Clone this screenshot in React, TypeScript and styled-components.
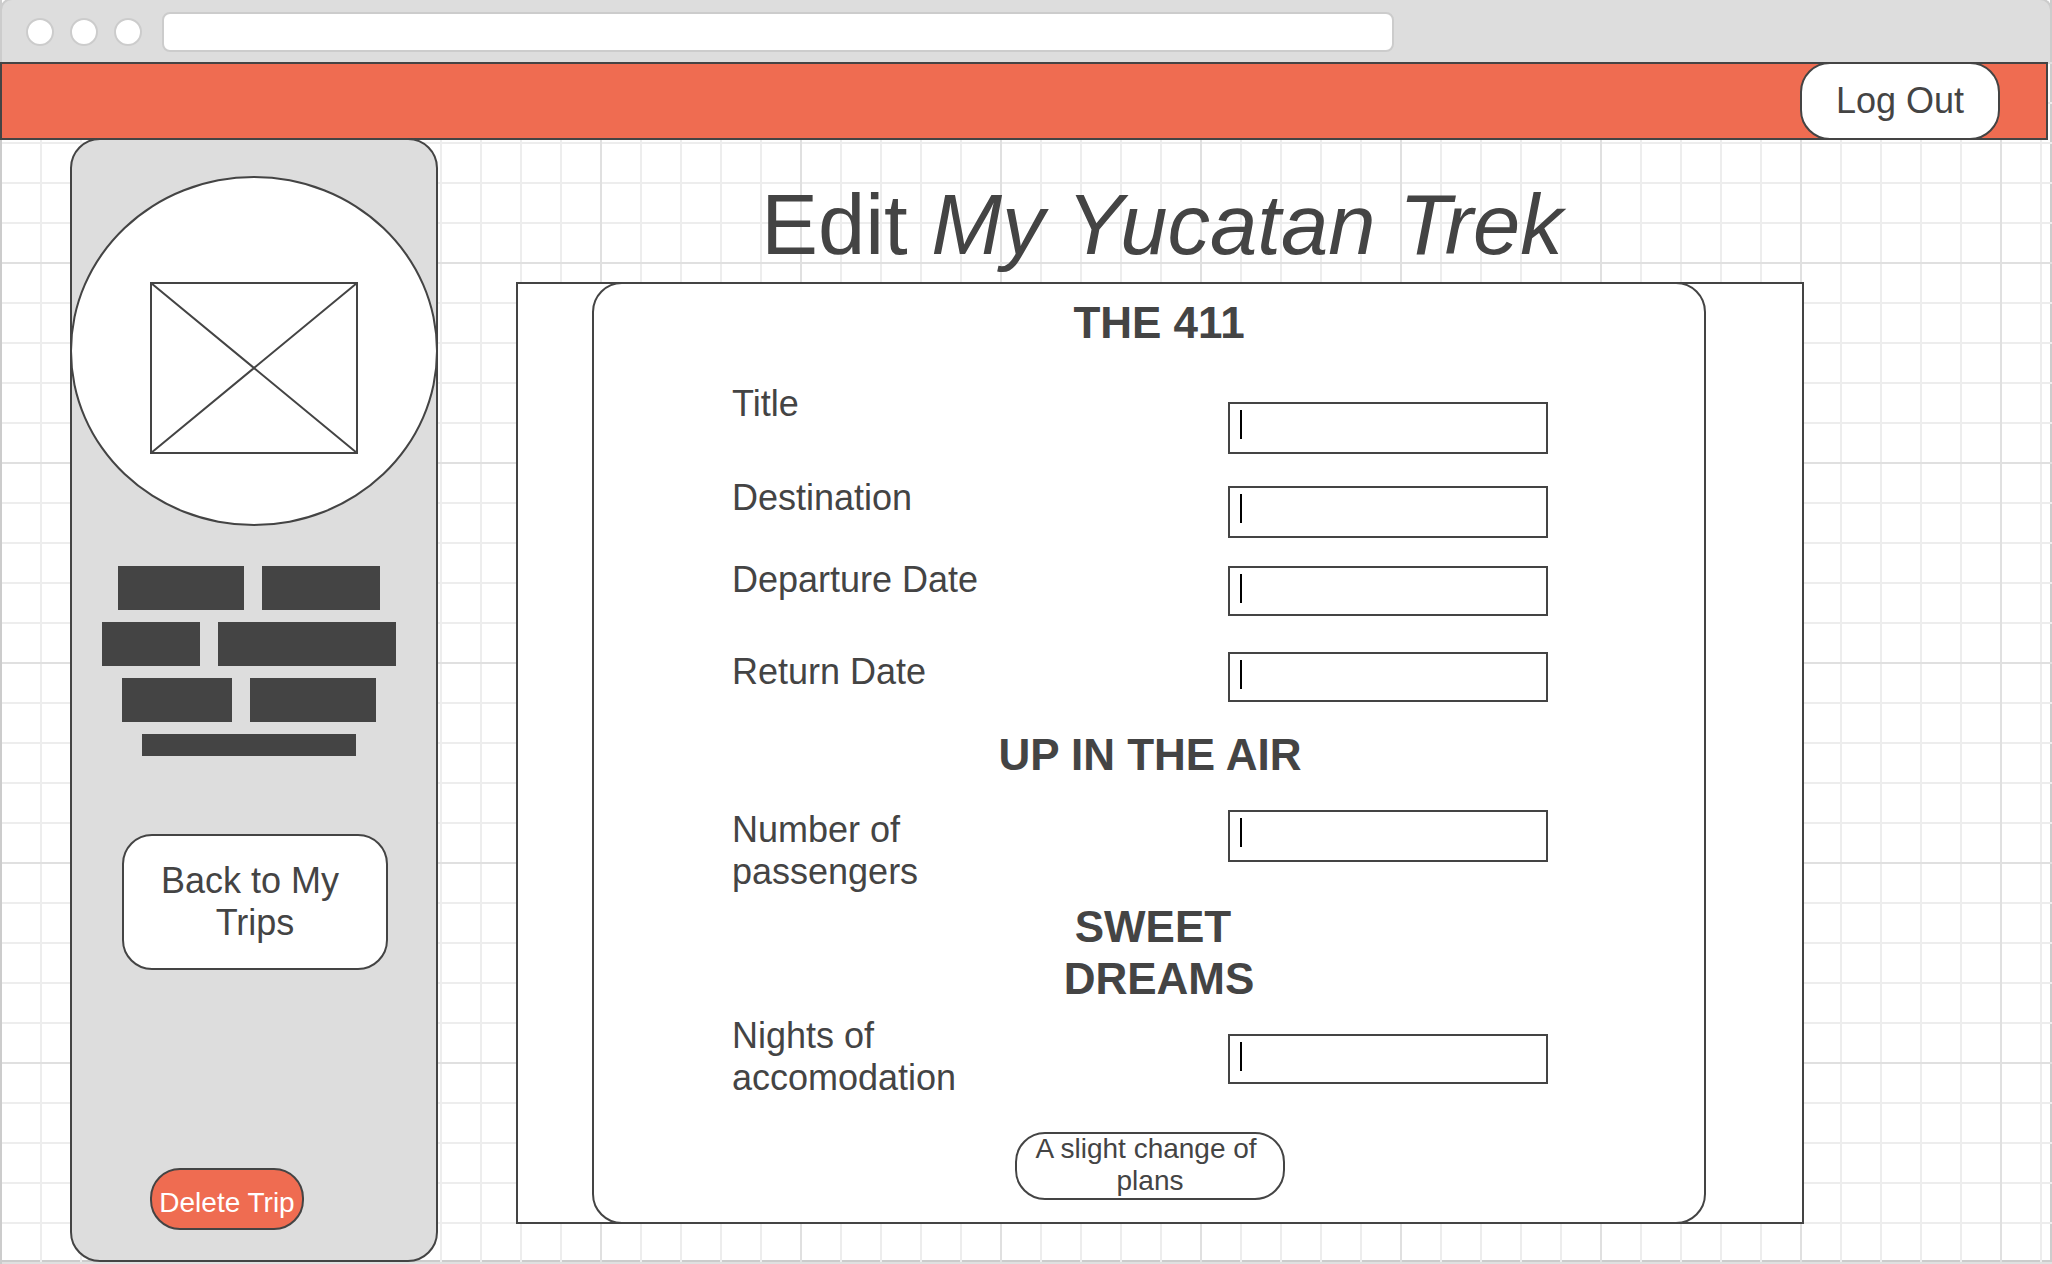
import React from "react";
import styled, { createGlobalStyle, css } from "styled-components";

const ink = "#444444";
const coral = "#ef6c51";
const grey = "#dddddd";
const edge = "#cccccc";
const gridMinor = "#ededed";
const gridMajor = "#e0e0e0";

const GlobalStyle = createGlobalStyle`
  *, *::before, *::after { box-sizing: border-box; }
  body { margin: 0; background: #fff; }
  body, button, input { font-family: "Liberation Sans", Arial, sans-serif; }
`;

/* Squared paper: 40px cells, a heavier rule every fifth, framed by the window edge. */
const Page = styled.div`
  min-height: 100vh;
  display: flex;
  flex-direction: column;
  color: ${ink};
  background:
    linear-gradient(${edge}, ${edge}) 0 0 / 2px 100% no-repeat,
    linear-gradient(to right, ${gridMajor} 2px, transparent 2px) 0 0 / 200px 200px,
    linear-gradient(to bottom, ${gridMajor} 2px, transparent 2px) 0 62px / 200px 200px,
    linear-gradient(to right, ${gridMinor} 2px, transparent 2px) 0 0 / 40px 40px,
    linear-gradient(to bottom, ${gridMinor} 2px, transparent 2px) 0 22px / 40px 40px,
    linear-gradient(${edge}, ${edge}) 100% 0 / 2px 100% no-repeat,
    linear-gradient(${edge}, ${edge}) 0 calc(100% - 2px) / 100% 2px no-repeat,
    #fff;
`;

const Chrome = styled.div`
  display: flex;
  align-items: center;
  height: 64px;
  margin-top: -2px;
  padding: 2px 24px 0;
  border: 2px solid ${edge};
  border-bottom: 0;
  border-radius: 12px 12px 0 0;
  background: ${grey};
`;

const Dots = styled.div`
  display: flex;
  gap: 16px;
  margin-right: 20px;
`;

const Dot = styled.span`
  width: 28px;
  height: 28px;
  border: 2px solid ${edge};
  border-radius: 50%;
  background: #fff;
`;

const Address = styled.input`
  width: 1232px;
  max-width: 100%;
  height: 40px;
  padding: 0 12px;
  border: 2px solid ${edge};
  border-radius: 8px;
  background: #fff;
  font-size: 20px;
  outline: none;
`;

const TopBar = styled.header`
  display: flex;
  justify-content: flex-end;
  height: 78px;
  margin-right: 4px;
  padding-right: 46px;
  border: 2px solid ${ink};
  background: ${coral};
`;

const pill = css`
  display: flex;
  align-items: center;
  justify-content: center;
  border: 2px solid ${ink};
  border-radius: 30px;
  background: #fff;
  color: ${ink};
  text-align: center;
  white-space: nowrap;
  cursor: pointer;
`;

const LargeButton = styled.button`
  ${pill}
  padding: 0;
  font-size: 36px;
  line-height: 42px;
`;

const SmallButton = styled.button`
  ${pill}
  padding: 0 0 2px;
  font-size: 28px;
  line-height: 32px;
`;

const LogOut = styled(LargeButton)`
  width: 200px;
  margin: -2px 0;
`;

const Body = styled.div`
  flex: 1;
  display: flex;
  padding: 0 248px 2px 70px;
`;

const Sidebar = styled.aside`
  display: flex;
  flex-direction: column;
  flex: 0 0 368px;
  margin-top: -2px;
  padding: 36px 0 30px;
  border: 2px solid ${ink};
  border-radius: 30px;
  background: ${grey};
`;

const Avatar = styled.div`
  display: flex;
  justify-content: center;
  height: 350px;
  margin: 0 -2px;
  padding-top: 104px;
  border: 2px solid ${ink};
  border-radius: 50%;
  background: #fff;
`;

const Bricks = styled.div`
  display: flex;
  flex-direction: column;
  align-items: center;
  gap: 12px;
  margin: 40px 10px 78px 0;
`;

const BrickRow = styled.div`
  display: flex;
  gap: 18px;
`;

const Brick = styled.span<{ $width: number; $thin?: boolean }>`
  width: ${(p) => p.$width}px;
  height: ${(p) => (p.$thin ? 22 : 44)}px;
  background: ${ink};
`;

const BackButton = styled(LargeButton)`
  width: 266px;
  height: 136px;
  margin-left: 50px;
`;

const DeleteButton = styled(SmallButton)`
  width: 154px;
  height: 62px;
  margin: auto 0 0 78px;
  padding: 8px 0 0;
  background: ${coral};
  color: #fff;
`;

const Main = styled.main`
  flex: 1;
  min-width: 0;
  display: flex;
  flex-direction: column;
  padding: 36px 0 38px 78px;
`;

const Title = styled.h1`
  margin: 0 0 8px;
  padding-left: 4px;
  font-size: 85px;
  line-height: 98px;
  font-weight: 400;
  text-align: center;
`;

const Panel = styled.section`
  padding: 0 96px 0 74px;
  border: 2px solid ${ink};
  background: #fff;
`;

const Form = styled.form`
  display: flex;
  flex-direction: column;
  margin: -2px 0;
  padding: 13px 0 22px 2px;
  border: 2px solid ${ink};
  border-radius: 30px;
`;

const Heading = styled.h2<{ $space?: number; $inset?: boolean }>`
  margin: ${(p) => p.$space ?? 0}px 0 0;
  padding-left: ${(p) => (p.$inset ? 18 : 0)}px;
  font-size: 44px;
  line-height: 52px;
  font-weight: 700;
  text-align: center;
`;

const FieldRow = styled.div<{ $space: number }>`
  display: flex;
  align-items: flex-start;
  justify-content: space-between;
  margin-top: ${(p) => p.$space}px;
  padding: 0 156px 0 136px;
`;

const Label = styled.label`
  max-width: 260px;
  font-size: 36px;
  line-height: 42px;
`;

/* An empty box with the text cursor resting at its start. */
const TextBox = styled.input<{ $drop: number; $tall?: boolean }>`
  width: 320px;
  height: ${(p) => (p.$tall ? 52 : 50)}px;
  margin: ${(p) => p.$drop}px 0 0;
  padding: 0 12px;
  border: 2px solid ${ink};
  border-radius: 0;
  background: linear-gradient(#000, #000) 10px 6px / 2px 29px no-repeat #fff;
  color: ${ink};
  font-size: 28px;
  outline: none;

  &:focus,
  &:not(:placeholder-shown) {
    background-image: none;
  }
`;

const SaveButton = styled(SmallButton)`
  align-self: center;
  width: 270px;
  height: 68px;
  margin-top: 33px;
`;

type FieldProps = {
  id: string;
  label: string;
  space: number;
  drop: number;
  tall?: boolean;
};

function Field({ id, label, space, drop, tall }: FieldProps) {
  return (
    <FieldRow $space={space}>
      <Label htmlFor={id}>{label}</Label>
      <TextBox id={id} name={id} type="text" placeholder=" " $drop={drop} $tall={tall} />
    </FieldRow>
  );
}

const brickRows = [
  [126, 118],
  [98, 178],
  [110, 126],
];

export default function App() {
  return (
    <>
      <GlobalStyle />
      <Page>
        <Chrome>
          <Dots>
            <Dot />
            <Dot />
            <Dot />
          </Dots>
          <Address type="text" aria-label="Address" />
        </Chrome>
        <TopBar>
          <LogOut type="button">Log Out</LogOut>
        </TopBar>
        <Body>
          <Sidebar>
            <Avatar>
              <svg width="208" height="172" viewBox="0 0 208 172" fill="none" stroke={ink} strokeWidth="2" role="img" aria-label="Profile picture">
                <rect x="1" y="1" width="206" height="170" />
                <path d="M1 1L207 171M207 1L1 171" />
              </svg>
            </Avatar>
            <Bricks aria-hidden="true">
              {brickRows.map((row, i) => (
                <BrickRow key={i}>
                  {row.map((width, j) => (
                    <Brick key={j} $width={width} />
                  ))}
                </BrickRow>
              ))}
              <Brick $width={214} $thin />
            </Bricks>
            <BackButton type="button">
              <span>
                Back to My&nbsp;
                <br />
                Trips
              </span>
            </BackButton>
            <DeleteButton type="button">Delete Trip</DeleteButton>
          </Sidebar>
          <Main>
            <Title>
              Edit <em>My Yucatan Trek</em>
            </Title>
            <Panel>
              <Form onSubmit={(e: React.FormEvent) => e.preventDefault()}>
                <Heading $inset>THE 411</Heading>
                <Field id="title" label="Title" space={34} drop={19} tall />
                <Field id="destination" label="Destination" space={23} drop={9} tall />
                <Field id="departure" label="Departure Date" space={21} drop={7} />
                <Field id="return" label="Return Date" space={35} drop={1} />
                <Heading $space={27}>UP IN THE AIR</Heading>
                <Field id="passengers" label="Number of passengers" space={28} drop={1} tall />
                <Heading $space={8} $inset>
                  SWEET&nbsp;
                  <br />
                  DREAMS
                </Heading>
                <Field id="nights" label="Nights of accomodation" space={10} drop={19} />
                <SaveButton type="submit">
                  <span>
                    A slight change of&nbsp;
                    <br />
                    plans
                  </span>
                </SaveButton>
              </Form>
            </Panel>
          </Main>
        </Body>
      </Page>
    </>
  );
}
